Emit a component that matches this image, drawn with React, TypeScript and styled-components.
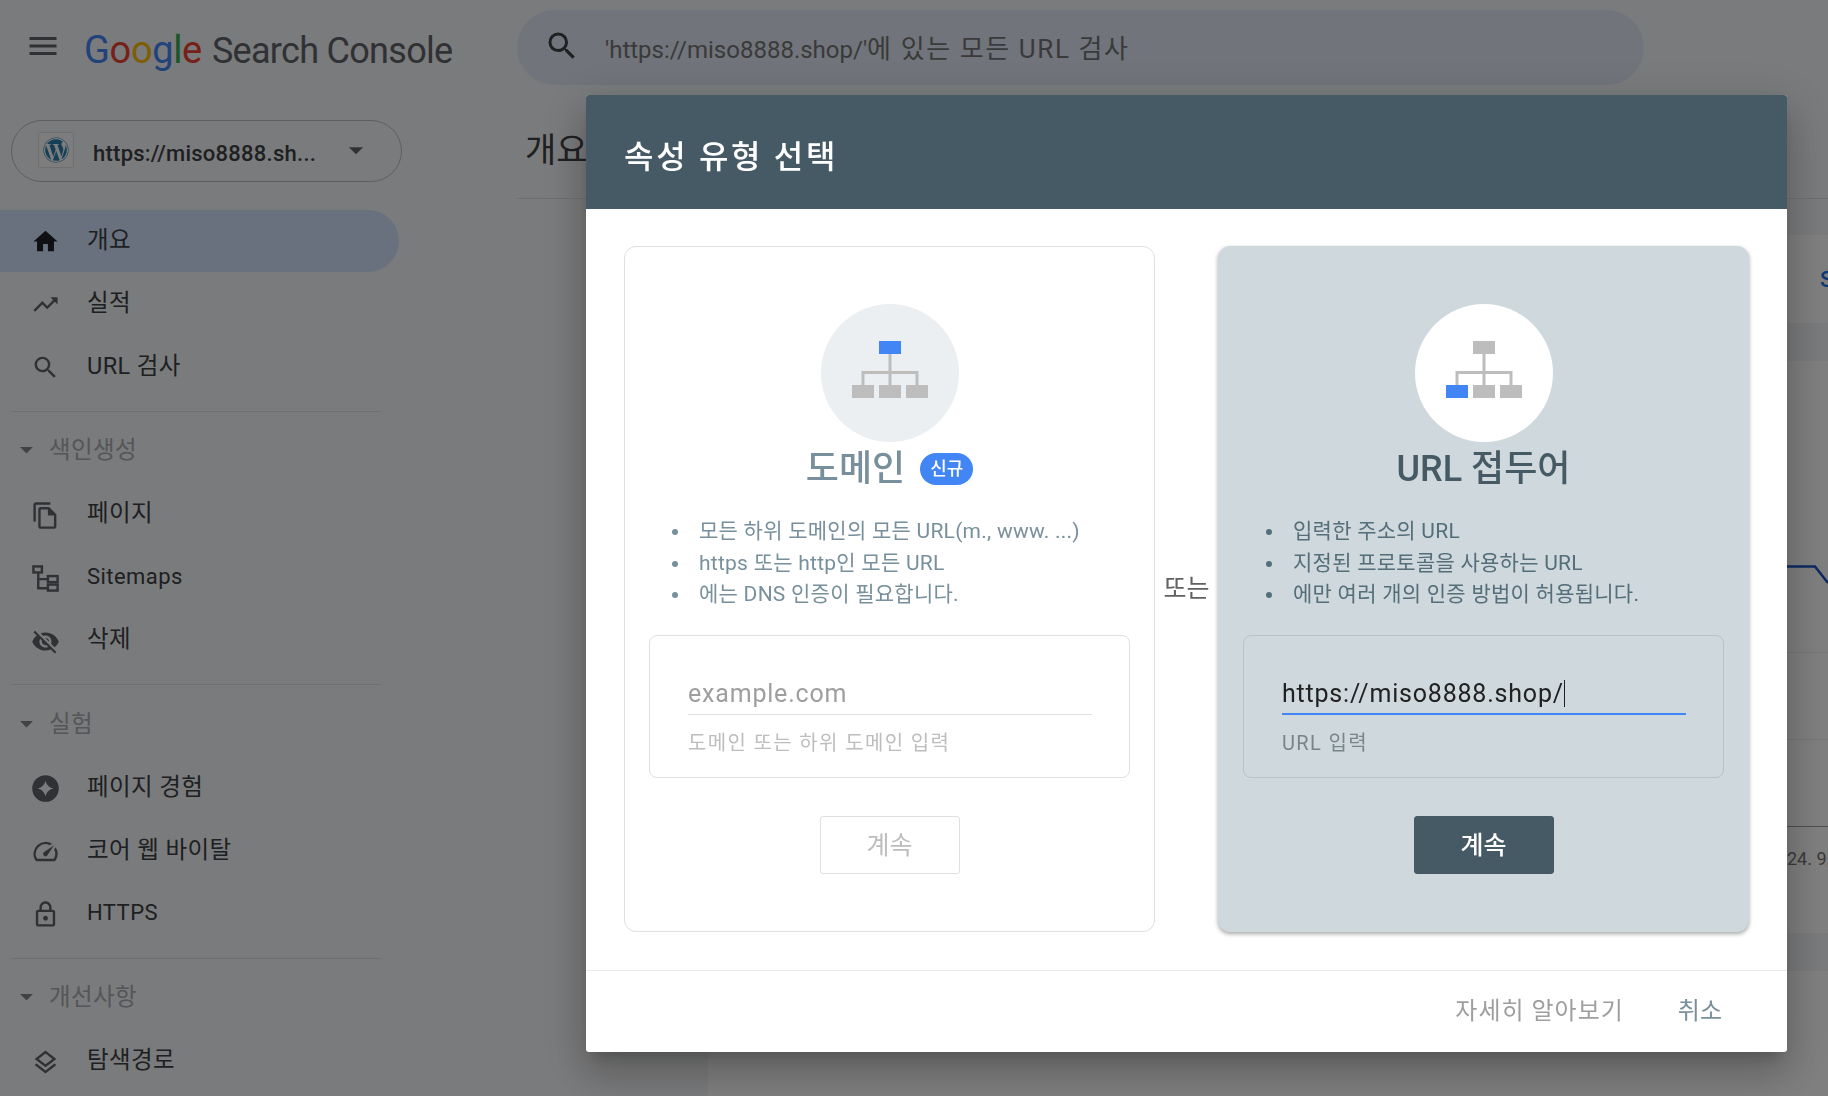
import React from 'react';
import styled, { createGlobalStyle } from 'styled-components';
import {
  MdMenu,
  MdSearch,
  MdArrowDropDown,
  MdHome,
  MdTrendingUp,
  MdOutlineFileCopy,
  MdVisibilityOff,
  MdOutlineSpeed,
  MdOutlineLock,
  MdOutlineLayers,
} from 'react-icons/md';
import { FaWordpress } from 'react-icons/fa';

const FONT = 'Roboto, "Noto Sans CJK KR", sans-serif';

const GlobalStyle = createGlobalStyle`
  html, body {
    margin: 0;
    padding: 0;
    background: #fff;
    font-family: ${FONT};
  }
  * { box-sizing: border-box; }
`;

const Page = styled.div`
  width: 1828px;
  height: 1096px;
  overflow: hidden;
  display: grid;
  grid-template-columns: 517px 1fr;
  background: #f5f6f8;
`;

/* sidebar */
const Sidebar = styled.aside`
  display: flex;
  flex-direction: column;
`;

const LogoRow = styled.div`
  height: 95px;
  display: flex;
  align-items: center;
  padding-left: 25px;
  flex-shrink: 0;
`;

const MenuIcon = styled(MdMenu)`
  width: 36px;
  height: 36px;
  color: #5f6368;
  margin-right: 23px;
  margin-top: -4px;
`;

const Logo = styled.div`
  font-size: 36px;
  letter-spacing: -0.7px;
  color: #5f6368;
  white-space: nowrap;
  margin-top: 5px;
`;

const LogoLetter = styled.span<{ $color: string }>`
  color: ${p => p.$color};
  font-size: 38px;
  letter-spacing: -0.35px;
`;

const LogoWord = styled.span`
  margin-right: 10px;
`;

const PropertySelect = styled.div`
  width: 391px;
  height: 62px;
  margin: 25px 0 28px 11px;
  border: 1.5px solid #bdbdbd;
  border-radius: 31px;
  display: flex;
  align-items: center;
  padding: 0 28px 0 26px;
  flex-shrink: 0;
`;

const Favicon = styled.div`
  width: 36px;
  height: 36px;
  border: 1px solid #e0e0e0;
  background: #fafafa;
  border-radius: 2px;
  display: flex;
  align-items: center;
  justify-content: center;
  margin-right: 19px;
  margin-top: -2px;
  color: #2a7fae;
  font-size: 26px;
`;

const PropertyName = styled.div`
  font-size: 22px;
  font-weight: 500;
  letter-spacing: 0.25px;
  color: #3c4043;
  white-space: nowrap;
  margin-top: 4px;
`;

const PropertyCaret = styled(MdArrowDropDown)`
  width: 34px;
  height: 34px;
  margin-left: auto;
  color: #5f6368;
  margin-top: -3px;
`;

const NavItem = styled.div<{ $active?: boolean }>`
  height: ${p => (p.$active ? '62px' : '63px')};
  margin-bottom: ${p => (p.$active ? '1px' : '0')};
  width: 399px;
  display: flex;
  align-items: center;
  padding-left: 31px;
  border-radius: 0 31px 31px 0;
  background: ${p => (p.$active ? '#d3e3fd' : 'transparent')};
  color: ${p => (p.$active ? '#202124' : '#5f6368')};
  flex-shrink: 0;

  svg {
    width: 29px;
    height: 29px;
    margin-right: 27px;
    flex-shrink: 0;
  }
`;

const NavLabel = styled.span<{ $latin?: boolean; $active?: boolean }>`
  font-size: ${p => (p.$latin ? '22px' : '23.5px')};
  color: #3c4043;
  letter-spacing: ${p => (p.$latin ? '0.45px' : '0.4px')};
  position: relative;
  top: ${p => (p.$latin ? '-2px' : p.$active ? '-3px' : '-4px')};
`;

const Divider = styled.div`
  height: 1px;
  width: 370px;
  margin: 11.5px 0 0 11px;
  background: #e0e0e0;
  flex-shrink: 0;
`;

const SectionHeader = styled.div`
  height: 72px;
  display: flex;
  align-items: center;
  padding-left: 11px;
  flex-shrink: 0;

  svg {
    width: 31px;
    height: 31px;
    margin-right: 7px;
    color: #80868b;
    margin-top: 4px;
  }
`;

const SectionLabel = styled.span`
  font-size: 23.5px;
  letter-spacing: 0.4px;
  color: #a9adb2;
  margin-top: 1px;
`;

/* main column */
const Main = styled.main`
  display: flex;
  flex-direction: column;
  min-width: 0;
`;

const SearchWrap = styled.div`
  height: 95px;
  padding-top: 10px;
  flex-shrink: 0;
`;

const SearchBar = styled.div`
  width: 1127px;
  height: 75px;
  border-radius: 38px;
  background: #e3e9f5;
  display: flex;
  align-items: center;
  padding-left: 27px;
  color: #3c4043;

  svg {
    width: 36px;
    height: 36px;
    margin-right: 25px;
    margin-top: -4px;
  }
`;

const SearchText = styled.span`
  font-size: 24px;
  color: #757575;
  white-space: nowrap;
  margin-top: -3px;
`;

const SearchHangul = styled.span`
  font-size: 26px;
  letter-spacing: 1.6px;
`;

const TitleRow = styled.div`
  height: 104px;
  border-bottom: 1px solid #e0e0e0;
  padding: 32px 0 0 8px;
  flex-shrink: 0;
`;

const PageTitle = styled.h1`
  margin: 0;
  font-size: 34px;
  font-weight: 400;
  line-height: 46px;
  color: #3c4043;
  white-space: nowrap;
`;

const Body = styled.div`
  flex: 1;
  padding: 36px 0 0 191px;
  display: flex;
  flex-direction: column;
  gap: 38px;
  min-height: 0;
`;

const SummaryCard = styled.section`
  height: 88px;
  background: #fff;
  display: flex;
  align-items: center;
  padding-left: 1112px;
  font-size: 22px;
  font-weight: 500;
  color: #1a73e8;
  flex-shrink: 0;
`;

const ChartCard = styled.section`
  height: 572px;
  background: #fff;
  padding-top: 205px;
  position: relative;
  flex-shrink: 0;
`;

const GridRow = styled.div<{ $axis?: boolean }>`
  height: 87px;
  border-bottom: 1px solid ${p => (p.$axis ? '#9e9e9e' : '#eeeeee')};
`;

const AxisLabel = styled.div`
  padding: 21px 0 0 1079px;
  font-size: 18px;
  color: #757575;
  white-space: nowrap;
`;

const ChartLine = styled.svg`
  position: absolute;
  right: 0;
  top: 200px;
`;

const BottomCard = styled.section`
  flex: 1;
  background: #fff;
`;

/* dialog */
const Scrim = styled.div`
  position: fixed;
  inset: 0;
  background: rgba(0, 0, 0, 0.5);
`;

const Dialog = styled.div`
  position: fixed;
  left: 586px;
  top: 95px;
  width: 1201px;
  height: 957px;
  background: #fff;
  border-radius: 3px;
  display: flex;
  flex-direction: column;
  box-shadow: 0 11px 15px -7px rgba(0, 0, 0, 0.2), 0 24px 38px 3px rgba(0, 0, 0, 0.14),
    0 9px 46px 8px rgba(0, 0, 0, 0.12);
`;

const DialogHeader = styled.header`
  height: 114px;
  background: #455a64;
  border-radius: 3px 3px 0 0;
  display: flex;
  align-items: center;
  padding-left: 38px;
  flex-shrink: 0;
`;

const DialogTitle = styled.h2`
  margin: 0;
  font-size: 32px;
  font-weight: 500;
  letter-spacing: 2.7px;
  color: #fff;
  position: relative;
  top: 2px;
`;

const DialogBody = styled.div`
  height: 761px;
  padding: 37px 38px 38px;
  display: grid;
  grid-template-columns: 531px 1fr 531px;
  align-items: stretch;
`;

const OrLabel = styled.div`
  display: flex;
  align-items: center;
  justify-content: center;
  font-size: 25px;
  color: #616161;
  padding-bottom: 6px;
`;

const TypeCard = styled.div<{ $selected?: boolean }>`
  border-radius: 12px;
  border: 1.5px solid ${p => (p.$selected ? '#cfd8dc' : '#e0e0e0')};
  background: ${p => (p.$selected ? '#cfd8dc' : '#fff')};
  box-shadow: ${p => (p.$selected ? '0 2px 4px rgba(0,0,0,0.35)' : 'none')};
  display: flex;
  flex-direction: column;
  align-items: center;
  padding: 57px 24px 0;
`;

const IconCircle = styled.div<{ $selected?: boolean }>`
  width: 138px;
  height: 138px;
  border-radius: 50%;
  background: ${p => (p.$selected ? '#fff' : '#eceff1')};
  display: flex;
  align-items: center;
  justify-content: center;
  padding-bottom: 7px;
  flex-shrink: 0;
`;

const TypeTitle = styled.div<{ $selected?: boolean }>`
  height: 44px;
  margin-top: 5px;
  display: flex;
  align-items: center;
  gap: 15px;
  font-size: 36px;
  font-weight: 500;
  line-height: 44px;
  color: ${p => (p.$selected ? '#455a64' : '#78909c')};
`;

const NewBadge = styled.span`
  width: 53px;
  height: 32px;
  border-radius: 16px;
  background: #4285f4;
  color: #fff;
  font-size: 18px;
  font-weight: 500;
  display: flex;
  align-items: center;
  justify-content: center;
`;

const FeatureList = styled.ul<{ $selected?: boolean }>`
  list-style: none;
  align-self: stretch;
  margin: 25px 0 0;
  padding: 0 0 0 50px;
  font-size: 21px;
  letter-spacing: 0.25px;
  line-height: 31.5px;
  color: ${p => (p.$selected ? '#546e7a' : '#78909c')};
  height: 95px;
  flex-shrink: 0;
`;

const FeatureItem = styled.li`
  position: relative;
  white-space: nowrap;

  &::before {
    content: '';
    position: absolute;
    left: -27px;
    top: 13px;
    width: 6px;
    height: 6px;
    border-radius: 50%;
    background: currentColor;
  }
`;

const InputPanel = styled.div<{ $selected?: boolean }>`
  align-self: stretch;
  height: 143px;
  margin-top: 24px;
  padding: 39px 37px 0 38px;
  border: 1.5px solid ${p => (p.$selected ? '#b8c3c8' : '#e0e0e0')};
  border-radius: 8px;
  flex-shrink: 0;
`;

const FieldValue = styled.div<{ $selected?: boolean }>`
  height: 40px;
  border-bottom: ${p => (p.$selected ? '2px solid #4285f4' : '1.5px solid #e0e0e0')};
  font-size: 25px;
  letter-spacing: 0.8px;
  line-height: 38px;
  color: ${p => (p.$selected ? '#212121' : '#9e9e9e')};
  white-space: nowrap;
`;

const Caret = styled.span`
  display: inline-block;
  width: 1.5px;
  height: 27px;
  background: #212121;
  vertical-align: -5px;
`;

const FieldHint = styled.div<{ $selected?: boolean }>`
  margin-top: 14px;
  font-size: 20px;
  letter-spacing: 1.35px;
  line-height: 28px;
  color: ${p => (p.$selected ? '#78858c' : '#bdbdbd')};
`;

const ContinueButton = styled.button<{ $selected?: boolean }>`
  width: 140px;
  height: 58px;
  margin-top: 38px;
  padding: 0 0 5px;
  border-radius: 3px;
  border: 1.5px solid ${p => (p.$selected ? '#455a64' : '#e0e0e0')};
  background: ${p => (p.$selected ? '#455a64' : '#fff')};
  color: ${p => (p.$selected ? '#fff' : '#bdbdbd')};
  font-family: ${FONT};
  font-size: 25px;
  font-weight: ${p => (p.$selected ? 500 : 400)};
  flex-shrink: 0;
`;

const DialogFooter = styled.footer`
  flex: 1;
  border-top: 1.5px solid #e8e8e8;
  display: flex;
  align-items: center;
  justify-content: flex-end;
  gap: 54px;
  padding: 0 65px 7px 0;
`;

const FooterAction = styled.span<{ $primary?: boolean }>`
  font-size: 24px;
  letter-spacing: ${p => (p.$primary ? '0' : '1px')};
  color: ${p => (p.$primary ? '#78909c' : '#9e9e9e')};
`;

const SitemapGlyph: React.FC<{ highlight: 'top' | 'left' }> = ({ highlight }) => {
  const blue = '#4285f4';
  const gray = '#bdbdbd';
  return (
    <svg width="76" height="57" viewBox="0 0 76 57">
      <path d="M38 12V44M11 44V31.5H65V44" fill="none" stroke={gray} strokeWidth="3" />
      <rect x="27" y="0" width="22" height="13" fill={highlight === 'top' ? blue : gray} />
      <rect x="0" y="44" width="22" height="13" fill={highlight === 'left' ? blue : gray} />
      <rect x="27" y="44" width="22" height="13" fill={gray} />
      <rect x="54" y="44" width="22" height="13" fill={gray} />
    </svg>
  );
};

const SitemapsIcon = () => (
  <svg viewBox="0 0 24 24" fill="none" stroke="currentColor" strokeWidth="2">
    <rect x="2" y="2" width="7" height="5" />
    <rect x="14" y="10" width="8" height="5" />
    <rect x="14" y="17" width="8" height="5" />
    <path d="M6 7V20H14M6 12.5H14" />
  </svg>
);

const ExperienceIcon = () => (
  <svg viewBox="0 0 24 24" fill="currentColor">
    <path
      fillRule="evenodd"
      d="M12 1a11 11 0 1 0 0 22a11 11 0 1 0 0-22zM12 5.5c1 3.6 2.9 5.5 6.5 6.5c-3.6 1-5.5 2.9-6.5 6.5c-1-3.6-2.9-5.5-6.5-6.5c3.6-1 5.5-2.9 6.5-6.5z"
    />
  </svg>
);

const NavRow: React.FC<{
  icon: React.ReactNode;
  label: string;
  active?: boolean;
  latin?: boolean;
}> = ({ icon, label, active, latin }) => (
  <NavItem $active={active}>
    {icon}
    <NavLabel $latin={latin} $active={active}>
      {label}
    </NavLabel>
  </NavItem>
);

const Section: React.FC<{ label: string }> = ({ label }) => (
  <>
    <Divider />
    <SectionHeader>
      <MdArrowDropDown />
      <SectionLabel>{label}</SectionLabel>
    </SectionHeader>
  </>
);

const googleLetters: [string, string][] = [
  ['G', '#4285f4'],
  ['o', '#ea4335'],
  ['o', '#fbbc05'],
  ['g', '#4285f4'],
  ['l', '#34a853'],
  ['e', '#ea4335'],
];

export default function App() {
  return (
    <>
      <GlobalStyle />
      <Page>
        <Sidebar>
          <LogoRow>
            <MenuIcon />
            <Logo>
              <LogoWord>
                {googleLetters.map(([letter, color], i) => (
                  <LogoLetter key={i} $color={color}>
                    {letter}
                  </LogoLetter>
                ))}
              </LogoWord>
              Search Console
            </Logo>
          </LogoRow>
          <PropertySelect>
            <Favicon>
              <FaWordpress />
            </Favicon>
            <PropertyName>https://miso8888.sh...</PropertyName>
            <PropertyCaret />
          </PropertySelect>
          <NavRow active icon={<MdHome />} label="개요" />
          <NavRow icon={<MdTrendingUp />} label="실적" />
          <NavRow icon={<MdSearch />} label="URL 검사" />
          <Section label="색인생성" />
          <NavRow icon={<MdOutlineFileCopy />} label="페이지" />
          <NavRow icon={<SitemapsIcon />} label="Sitemaps" latin />
          <NavRow icon={<MdVisibilityOff />} label="삭제" />
          <Section label="실험" />
          <NavRow icon={<ExperienceIcon />} label="페이지 경험" />
          <NavRow icon={<MdOutlineSpeed />} label="코어 웹 바이탈" />
          <NavRow icon={<MdOutlineLock />} label="HTTPS" latin />
          <Section label="개선사항" />
          <NavRow icon={<MdOutlineLayers />} label="탐색경로" />
        </Sidebar>

        <Main>
          <SearchWrap>
            <SearchBar>
              <MdSearch />
              <SearchText>
                'https://miso8888.shop/'
                <SearchHangul>에 있는 모든 URL 검사</SearchHangul>
              </SearchText>
            </SearchBar>
          </SearchWrap>
          <TitleRow>
            <PageTitle>개요</PageTitle>
          </TitleRow>
          <Body>
            <SummaryCard>S</SummaryCard>
            <ChartCard>
              <ChartLine width="60" height="40" viewBox="0 0 60 40">
                <polyline points="0,5.5 47,5.5 60,22" fill="none" stroke="#1a56c4" strokeWidth="2.5" />
              </ChartLine>
              <GridRow />
              <GridRow />
              <GridRow $axis />
              <AxisLabel>24. 9.</AxisLabel>
            </ChartCard>
            <BottomCard />
          </Body>
        </Main>
      </Page>

      <Scrim />
      <Dialog>
        <DialogHeader>
          <DialogTitle>속성 유형 선택</DialogTitle>
        </DialogHeader>
        <DialogBody>
          <TypeCard>
            <IconCircle>
              <SitemapGlyph highlight="top" />
            </IconCircle>
            <TypeTitle>
              도메인
              <NewBadge>신규</NewBadge>
            </TypeTitle>
            <FeatureList>
              <FeatureItem>모든 하위 도메인의 모든 URL(m., www. ...)</FeatureItem>
              <FeatureItem>https 또는 http인 모든 URL</FeatureItem>
              <FeatureItem>에는 DNS 인증이 필요합니다.</FeatureItem>
            </FeatureList>
            <InputPanel>
              <FieldValue>example.com</FieldValue>
              <FieldHint>도메인 또는 하위 도메인 입력</FieldHint>
            </InputPanel>
            <ContinueButton>계속</ContinueButton>
          </TypeCard>

          <OrLabel>또는</OrLabel>

          <TypeCard $selected>
            <IconCircle $selected>
              <SitemapGlyph highlight="left" />
            </IconCircle>
            <TypeTitle $selected>URL 접두어</TypeTitle>
            <FeatureList $selected>
              <FeatureItem>입력한 주소의 URL</FeatureItem>
              <FeatureItem>지정된 프로토콜을 사용하는 URL</FeatureItem>
              <FeatureItem>에만 여러 개의 인증 방법이 허용됩니다.</FeatureItem>
            </FeatureList>
            <InputPanel $selected>
              <FieldValue $selected>
                https://miso8888.shop/
                <Caret />
              </FieldValue>
              <FieldHint $selected>URL 입력</FieldHint>
            </InputPanel>
            <ContinueButton $selected>계속</ContinueButton>
          </TypeCard>
        </DialogBody>
        <DialogFooter>
          <FooterAction>자세히 알아보기</FooterAction>
          <FooterAction $primary>취소</FooterAction>
        </DialogFooter>
      </Dialog>
    </>
  );
}
